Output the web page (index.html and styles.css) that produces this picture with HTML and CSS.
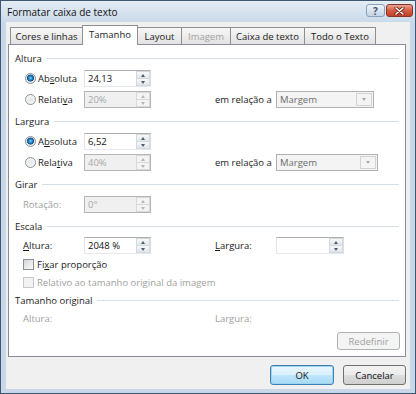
FILE: index.html
```html
<!DOCTYPE html>
<html lang="pt">
<head>
<meta charset="utf-8">
<title>Formatar caixa de texto</title>
<link rel="stylesheet" href="styles.css">
</head>
<body>
<div class="window">
  <div class="titlebar">
    <span class="title">Formatar caixa de texto</span>
    <div class="caption-btns">
      <span class="cbtn help">?</span>
      <span class="cbtn close"><svg width="11" height="8" viewBox="0 0 11 8"><path d="M2 1 L9 7 M9 1 L2 7" stroke="#6b2317" stroke-width="3.2" stroke-linecap="round"/><path d="M2 1 L9 7 M9 1 L2 7" stroke="#ffffff" stroke-width="1.6" stroke-linecap="round"/></svg></span>
    </div>
  </div>
  <div class="client">
    <div class="tabs">
      <span class="tab t1">Cores e linhas</span>
      <span class="tab t2 active">Tamanho</span>
      <span class="tab t3">Layout</span>
      <span class="tab t4 dis">Imagem</span>
      <span class="tab t5">Caixa de texto</span>
      <span class="tab t6">Todo o Texto</span>
    </div>
    <div class="panel">
      <div class="head"><span>Altura</span><i class="rule"></i></div>
      <div class="row">
        <span class="lbl"><span class="radio on"></span>Ab<u>s</u>oluta</span>
        <span class="spin"><span class="val">24,13</span><span class="arrows"><i class="btn"><b class="up"></b></i><i class="btn"><b class="dn"></b></i></span></span>
      </div>
      <div class="row">
        <span class="lbl"><span class="radio"></span>Relati<u>v</u>a</span>
        <span class="spin dis"><span class="val">20%</span><span class="arrows"><i class="btn"><b class="up"></b></i><i class="btn"><b class="dn"></b></i></span></span>
        <span class="lbl2">em relação a</span>
        <span class="combo c1"><span class="val">Margem</span><span class="drop"><b class="dn"></b></span></span>
      </div>

      <div class="head"><span>Largura</span><i class="rule"></i></div>
      <div class="row">
        <span class="lbl"><span class="radio on"></span>A<u>b</u>soluta</span>
        <span class="spin"><span class="val">6,52</span><span class="arrows"><i class="btn"><b class="up"></b></i><i class="btn"><b class="dn"></b></i></span></span>
      </div>
      <div class="row">
        <span class="lbl"><span class="radio"></span>Rela<u>t</u>iva</span>
        <span class="spin dis"><span class="val">40%</span><span class="arrows"><i class="btn"><b class="up"></b></i><i class="btn"><b class="dn"></b></i></span></span>
        <span class="lbl2">em relação a</span>
        <span class="combo c2"><span class="val">Margem</span><span class="drop"><b class="dn"></b></span></span>
      </div>

      <div class="head"><span>Girar</span><i class="rule"></i></div>
      <div class="row">
        <span class="lbl dis-text">Rotação:</span>
        <span class="spin dis"><span class="val">0°</span><span class="arrows"><i class="btn"><b class="up"></b></i><i class="btn"><b class="dn"></b></i></span></span>
      </div>

      <div class="head"><span>Escala</span><i class="rule"></i></div>
      <div class="row mid">
        <span class="lbl"><u>A</u>ltura:</span>
        <span class="spin"><span class="val">2048 %</span><span class="arrows"><i class="btn"><b class="up"></b></i><i class="btn"><b class="dn"></b></i></span></span>
        <span class="lbl2"><u>L</u>argura:</span>
        <span class="spin wide"><span class="val"></span><span class="arrows"><i class="btn"><b class="up"></b></i><i class="btn"><b class="dn"></b></i></span></span>
      </div>
      <div class="row sm">
        <span class="check"></span><span>Fi<u>x</u>ar proporção</span>
      </div>
      <div class="row sm">
        <span class="check dis"></span><span class="dis-text">Relativo ao tamanho original da imagem</span>
      </div>

      <div class="head tight"><span>Tamanho original</span><i class="rule"></i></div>
      <div class="row sm">
        <span class="lbl-orig dis-text">Altura:</span>
        <span class="dis-text">Largura:</span>
      </div>
      <div class="actions">
        <span class="button dis">Redefinir</span>
      </div>
    </div>
    <div class="footer">
      <span class="button default ok">OK</span>
      <span class="button cancel">Cancelar</span>
    </div>
  </div>
</div>
</body>
</html>
```

FILE: styles.css
```css
* { box-sizing: border-box; }

body {
  margin: 0;
  font-family: "Open Sans", "Noto Sans", sans-serif;
  font-size: 9.5px;
  color: #1a1a1a;
  background: #ffffff;
}

u { text-decoration: underline; text-underline-offset: 1px; }

.window {
  width: 416px;
  height: 394px;
  border: 1px solid #3d5870;
  background: #c8d8e9;
  display: flex;
  flex-direction: column;
}

.titlebar {
  height: 21px;
  display: flex;
  align-items: center;
  justify-content: space-between;
  padding: 0 2px 0 6px;
  background: linear-gradient(#e4ecf5, #cbdaea);
}

.title { font-size: 10px; color: #111; }

.caption-btns {
  display: flex;
  gap: 1px;
  align-self: flex-start;
  margin-top: 3px;
}

.cbtn {
  height: 13px;
  border-radius: 3px;
  display: flex;
  align-items: center;
  justify-content: center;
}

.help {
  width: 19px;
  border: 1px solid #8da2b9;
  background: linear-gradient(#eef3f8, #c4d4e6);
  color: #3b5573;
  font-weight: bold;
  font-size: 10px;
  line-height: 1;
}

.close {
  width: 27px;
  border: 1px solid #8b3526;
  background: linear-gradient(#eba493, #d45d44 50%, #c2402a);
}

.client {
  flex: 1;
  margin: 0 5px 4px;
  background: #f0f0f0;
  padding: 3px 4px 0 2px;
  display: flex;
  flex-direction: column;
}

.tabs {
  display: flex;
  align-items: flex-end;
  height: 19px;
  padding-left: 2px;
  position: relative;
  z-index: 1;
}

.tab {
  height: 17px;
  border: 1px solid #8e8f8f;
  border-bottom: none;
  background: linear-gradient(#f7f7f7, #e2e2e2);
  margin-left: -1px;
  display: flex;
  align-items: center;
  justify-content: center;
  white-space: nowrap;
}
.tab.t1 { margin-left: 0; width: 73px; }
.tab.t2 { width: 56px; }
.tab.t3 { width: 45px; }
.tab.t4 { width: 50px; }
.tab.t5 { width: 75px; }
.tab.t6 { width: 72px; }
.tab.active {
  height: 20px;
  background: #ffffff;
  margin-bottom: -1px;
  padding-bottom: 2px;
}
.tab.dis { color: #a3a3a3; }

.panel {
  background: #ffffff;
  border: 1px solid #898c95;
  padding: 2px 0 6px;
}

.head {
  display: flex;
  align-items: center;
  height: 14px;
  margin: 4px 0 3px;
  padding-left: 6px;
}
.head.tight { margin: 2px 0 2px; }
.head .rule {
  flex: 1;
  height: 1px;
  background: #d5dfe5;
  margin: 0 6px 0 5px;
}

.row {
  display: flex;
  align-items: center;
  height: 21px;
  padding-left: 14px;
  white-space: nowrap;
}
.row.mid { height: 19px; }
.row.sm { height: 18px; }

.lbl {
  width: 61px;
  display: flex;
  align-items: center;
}
.lbl2 { width: 61px; margin-left: 64px; }
.lbl-orig { width: 192px; }

.dis-text { color: #a0a0a0; }

.radio {
  width: 11px;
  height: 11px;
  border-radius: 50%;
  border: 1px solid #8b9097;
  background: radial-gradient(circle at 50% 50%, #e2e4e7 0, #f7f7f7 70%);
  margin: 0 2px 0 2px;
}
.radio.on {
  background: radial-gradient(circle at 50% 45%, #8fd0f3 0, #2c8fcf 1.6px, #0d4f86 3.2px, #e8ebee 3.8px, #f8f8f8 100%);
}

.check {
  width: 11px;
  height: 11px;
  border: 1px solid #8e8f8f;
  background: linear-gradient(135deg, #d5d7da, #f9f9f9);
  margin-right: 3px;
}
.check.dis { border-color: #c8c8c8; background: #f2f2f2; }

.spin {
  width: 67px;
  height: 17px;
  border: 1px solid #abadb3;
  border-color: #abadb3 #dbdfe6 #e3e9ef #e2e3ea;
  background: #ffffff;
  display: flex;
  color: #111;
}
.spin.wide { width: 68px; }
.spin .val { flex: 1; padding-left: 3px; display: flex; align-items: center; }
.spin .arrows {
  width: 15px;
  display: flex;
  flex-direction: column;
  padding: 0 0 0 1px;
}
.spin .btn {
  flex: 1;
  display: flex;
  align-items: center;
  justify-content: center;
  border: 1px solid #d3d8de;
  background: linear-gradient(#f6f8fa, #e1e6ec);
}
.spin .btn + .btn { border-top: none; }

.spin.dis { background: #f0f0f0; border-color: #b4b4b4; color: #a8a8a8; }
.spin.dis .btn { border-color: #d9d9d9; background: #f4f4f4; }

.up, .dn {
  display: block;
  width: 0;
  height: 0;
  border-left: 2.5px solid transparent;
  border-right: 2.5px solid transparent;
}
.up { border-bottom: 3px solid #4d5b6b; }
.dn { border-top: 3px solid #4d5b6b; }
.dis .up { border-bottom-color: #b6b6b6; }
.dis .dn { border-top-color: #b6b6b6; }

.combo {
  height: 17px;
  border: 1px solid #adb2b5;
  background: #f4f4f4;
  display: flex;
  color: #6d6d6d;
}
.combo.c1 { width: 98px; }
.combo.c2 { width: 102px; }
.combo .val { flex: 1; padding-left: 3px; display: flex; align-items: center; }
.combo .drop {
  width: 16px;
  margin: 1px;
  border: 1px solid #d2d2d2;
  background: #f4f4f4;
  display: flex;
  align-items: center;
  justify-content: center;
}
.combo .dn { border-top-color: #a8a8a8; }

.actions {
  display: flex;
  justify-content: flex-end;
  padding-right: 5px;
  margin-top: 5px;
}

.button {
  display: flex;
  align-items: center;
  justify-content: center;
  border-radius: 3px;
  height: 20px;
  width: 63px;
  border: 1px solid #707070;
  background: linear-gradient(#f2f2f2 0, #ebebeb 50%, #dddddd 51%, #cfcfcf 100%);
  color: #111;
}
.button.dis {
  height: 18px;
  border-color: #adb2b5;
  background: #f4f4f4;
  color: #a0a0a0;
}
.button.default {
  border-color: #3c7fb1;
  background: linear-gradient(#eaf6fd 0, #d9f0fc 50%, #bee6fd 51%, #a7d9f5 100%);
  box-shadow: inset 0 0 0 1px #9fd5f1;
}
.button.ok { width: 64px; }

.footer {
  display: flex;
  justify-content: flex-end;
  gap: 9px;
  padding-top: 8px;
}
```
